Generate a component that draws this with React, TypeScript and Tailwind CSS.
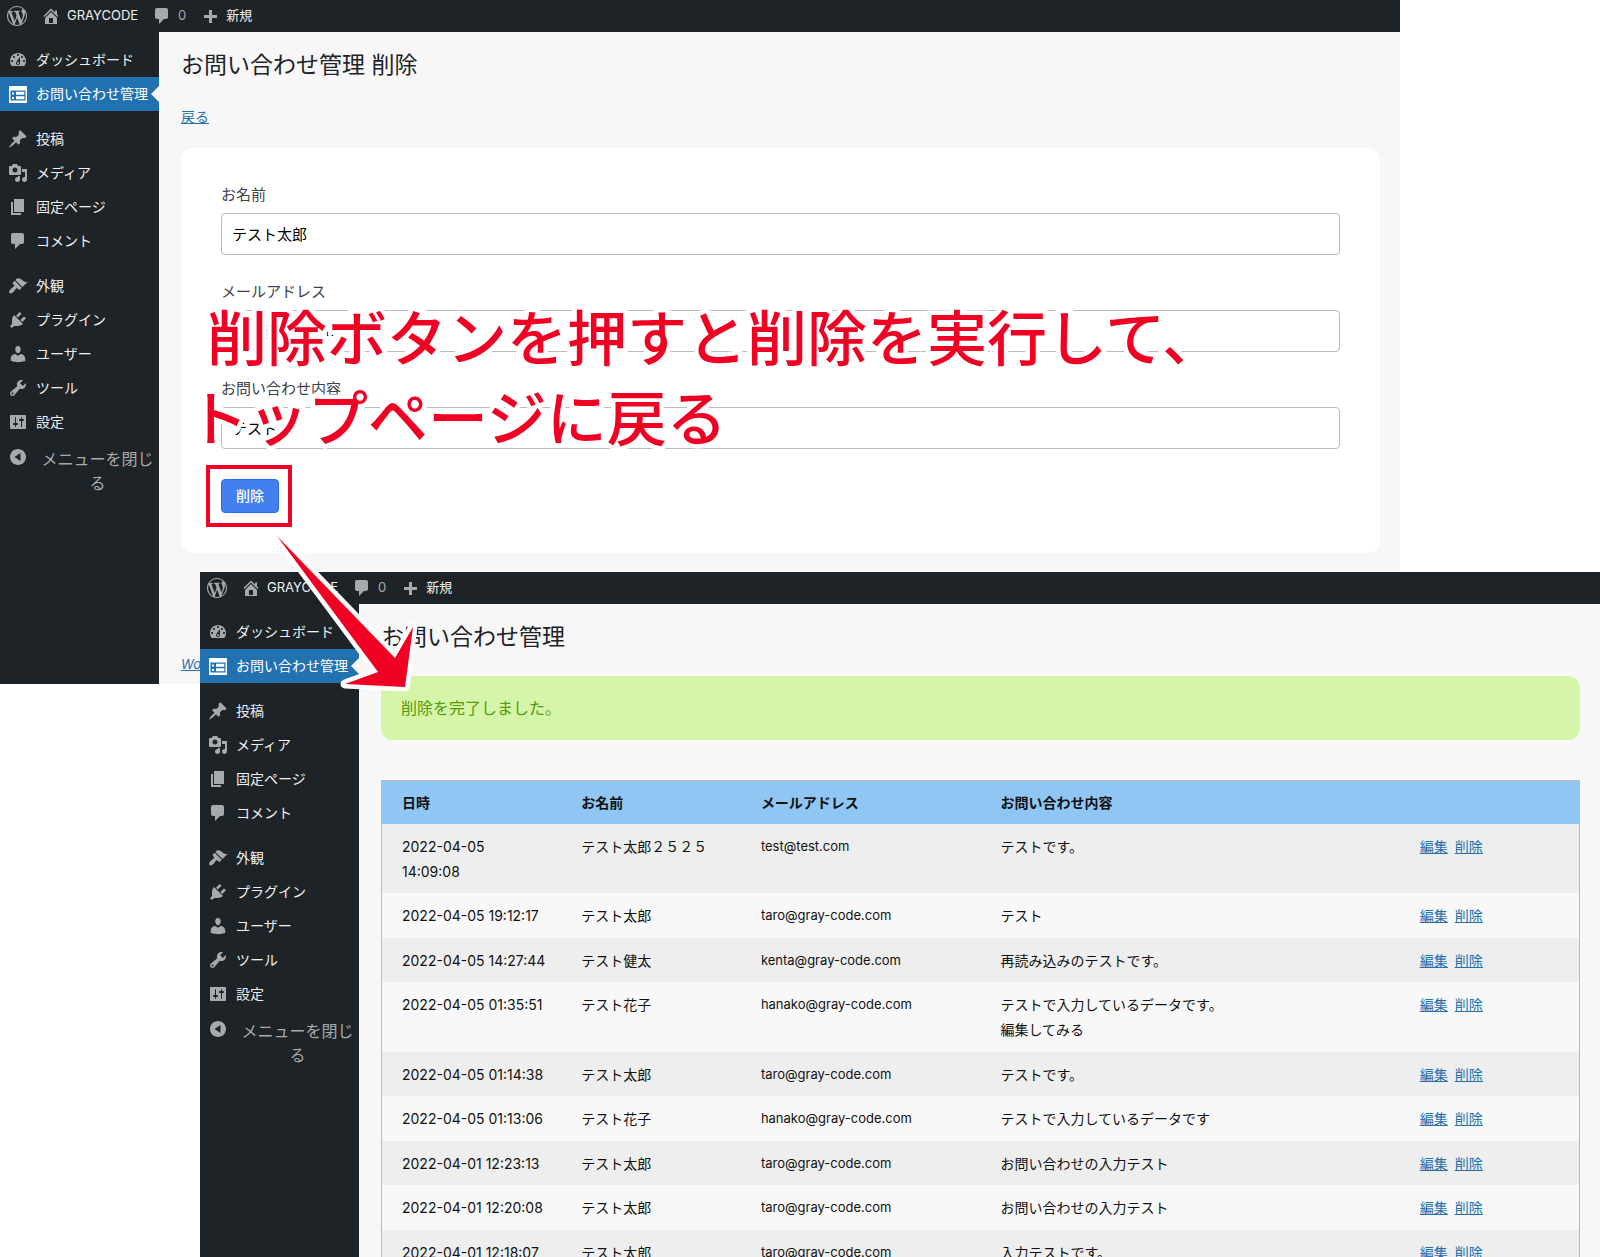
import React from "react";

type IconProps = {
  d: string;
  className?: string;
};

const ICONS = {
  wordpress:
    "M20 10c0-5.51-4.49-10-10-10C4.48 0 0 4.49 0 10c0 5.52 4.48 10 10 10 5.51 0 10-4.48 10-10zM7.78 15.37L4.37 6.22c.55-.02 1.17-.08 1.17-.08.5-.06.44-1.13-.06-1.11 0 0-1.45.11-2.37.11-.18 0-.37 0-.58-.01C4.12 2.69 6.87 1.11 10 1.11c2.33 0 4.45.87 6.05 2.34-.68-.11-1.65.39-1.65 1.58 0 .74.45 1.36.9 2.1.35.61.55 1.36.55 2.46 0 1.49-1.4 5-1.4 5l-3.03-8.37c.54-.02.82-.17.82-.17.5-.05.44-1.25-.06-1.22 0 0-1.44.12-2.38.12-.87 0-2.33-.12-2.33-.12-.5-.03-.56 1.2-.06 1.22l.92.08 1.26 3.41zM17.41 10c.24-.64.74-1.87.43-4.25.7 1.29 1.05 2.71 1.05 4.25 0 3.29-1.73 6.24-4.4 7.78.97-2.59 1.94-5.2 2.92-7.78zM6.1 18.09C3.12 16.65 1.11 13.53 1.11 10c0-1.3.23-2.48.72-3.59C3.25 10.3 4.67 14.2 6.1 18.09zm4.03-6.63l2.58 6.98c-.86.29-1.76.45-2.71.45-.79 0-1.57-.11-2.29-.33.81-2.38 1.62-4.74 2.42-7.1z",
  home: "M16 8.5l1.53 1.53-1.06 1.06L10 4.6l-6.47 6.49-1.06-1.06L10 2.5l4 4v-2h2v4zm-6-2.46l6 5.99V18H4v-5.97zM12 17v-5H8v5h4z",
  comment:
    "M5 2h9c1.1 0 2 .9 2 2v7c0 1.1-.9 2-2 2h-2l-5 5v-5H5c-1.1 0-2-.9-2-2V4c0-1.1.9-2 2-2z",
  plus: "M17 9v3h-5v5H9v-5H4V9h5V4h3v5h5z",
  dashboard:
    "M3.76 16h12.48c1.1-1.37 1.76-3.11 1.76-5 0-4.42-3.58-8-8-8s-8 3.58-8 8c0 1.89.66 3.63 1.76 5zM10 4c.55 0 1 .45 1 1s-.45 1-1 1-1-.45-1-1 .45-1 1-1zM6 6c.55 0 1 .45 1 1s-.45 1-1 1-1-.45-1-1 .45-1 1-1zm8 0c.55 0 1 .45 1 1s-.45 1-1 1-1-.45-1-1 .45-1 1-1zm-5.37 5.55L12 7v6c0 1.1-.9 2-2 2s-2-.9-2-2c0-.57.24-1.08.63-1.45zM4 10c.55 0 1 .45 1 1s-.45 1-1 1-1-.45-1-1 .45-1 1-1zm12 0c.55 0 1 .45 1 1s-.45 1-1 1-1-.45-1-1 .45-1 1-1zm-5 3c0-.55-.45-1-1-1s-1 .45-1 1 .45 1 1 1 1-.45 1-1z",
  feedback:
    "M2 2h16c.55 0 1 .45 1 1v15c0 .55-.45 1-1 1H2c-.55 0-1-.45-1-1V3c0-.55.45-1 1-1zm15.5 14.5v-10H2.5v10h15zM4 8.5v2h2v-2H4zM8 7.7v3.1h8.3V7.7H8zM4 13v2h2v-2H4zm4-.8v3.1h8.3v-3.1H8z",
  post: "M10.44 3.02l1.82-1.82 6.36 6.35-1.83 1.82c-1.05-.68-2.48-.57-3.41.36l-.75.75c-.92.93-1.04 2.35-.35 3.41l-1.83 1.82-2.41-2.41-2.8 2.79c-.42.42-3.38 2.71-3.8 2.29s1.86-3.39 2.28-3.81l2.79-2.79L4.1 9.36l1.83-1.82c1.05.69 2.48.57 3.4-.36l.75-.75c.93-.92 1.05-2.35.36-3.41z",
  media:
    "M13 11V4c0-.55-.45-1-1-1h-1.67L9 1H5L3.67 3H2c-.55 0-1 .45-1 1v7c0 .55.45 1 1 1h10c.55 0 1-.45 1-1zM7 4.5c1.38 0 2.5 1.12 2.5 2.5S8.38 9.5 7 9.5 4.5 8.38 4.5 7 5.62 4.5 7 4.5zM14 6h5v10.5c0 1.38-1.12 2.5-2.5 2.5S14 17.88 14 16.5s1.12-2.5 2.5-2.5c.17 0 .34.02.5.05V9h-3V6zm-4 8.05V13h2v3.5c0 1.38-1.12 2.5-2.5 2.5S7 17.88 7 16.5 8.12 14 9.5 14c.17 0 .34.02.5.05z",
  page: "M6 15V2h10v13H6zm-1 1h8v2H3V5h2v11z",
  appearance:
    "M14.48 11.06L7.41 3.99l1.5-1.5c.5-.56 2.3-.47 3.51.32 1.21.8 1.43 1.28 2.91 2.1 1.18.64 2.45 1.26 4.45.85zm-.71.71L6.7 4.7 4.93 6.47c-.39.39-.39 1.02 0 1.41l1.06 1.06c.39.39.39 1.03 0 1.42-.6.6-1.43 1.11-2.21 1.69-.35.26-.7.53-1.01.84C1.43 14.23.4 16.08 1.4 17.07c.99 1 2.84-.03 4.18-1.36.31-.31.58-.66.85-1.02.57-.78 1.08-1.61 1.69-2.21.39-.39 1.02-.39 1.41 0l1.06 1.06c.39.39 1.02.39 1.41 0z",
  plugins:
    "M13.11 4.36L9.87 7.6 8 5.73l3.24-3.24c.35-.34 1.05-.2 1.56.32.52.51.66 1.21.31 1.55zm-8 1.77l.91-1.12 9.01 9.01-1.19.84c-.71.71-2.63 1.16-3.82 1.16H6.14L4.9 17.26c-.59.59-1.54.59-2.12 0-.59-.58-.59-1.53 0-2.12l1.24-1.24v-3.88c0-1.13.4-3.19 1.09-3.89zm7.26 3.97l3.24-3.24c.34-.35 1.04-.21 1.55.31.52.51.66 1.21.31 1.55l-3.24 3.25z",
  users:
    "M10 9.25c-2.27 0-2.73-3.44-2.73-3.44C7 4.02 7.82 2 9.97 2c2.16 0 2.98 2.02 2.71 3.81 0 0-.41 3.44-2.68 3.44zm0 2.57L12.72 10c2.39 0 4.52 2.33 4.52 4.53v2.49s-3.65 1.13-7.24 1.13c-3.65 0-7.24-1.13-7.24-1.13v-2.49c0-2.25 1.94-4.48 4.47-4.48z",
  tools:
    "M16.68 9.77c-1.34 1.34-3.3 1.67-4.95.99l-5.41 6.52c-.99.99-2.59.99-3.58 0s-.99-2.59 0-3.57l6.52-5.42c-.68-1.65-.35-3.61.99-4.95 1.28-1.28 3.12-1.62 4.72-1.06l-2.89 2.89 2.82 2.82 2.86-2.87c.53 1.58.18 3.39-1.08 4.65zM3.81 16.21c.4.39 1.04.39 1.43 0 .4-.4.4-1.04 0-1.43-.39-.4-1.03-.4-1.43 0-.39.39-.39 1.03 0 1.43z",
  settings:
    "M18 16V4c0-.55-.45-1-1-1H3c-.55 0-1 .45-1 1v12c0 .55.45 1 1 1h14c.55 0 1-.45 1-1zM8 11h1c.55 0 1 .45 1 1s-.45 1-1 1H8v1.5c0 .28-.22.5-.5.5s-.5-.22-.5-.5V13H6c-.55 0-1-.45-1-1s.45-1 1-1h1V5.5c0-.28.22-.5.5-.5s.5.22.5.5V11zm5-2h-1c-.55 0-1-.45-1-1s.45-1 1-1h1V5.5c0-.28.22-.5.5-.5s.5.22.5.5V7h1c.55 0 1 .45 1 1s-.45 1-1 1h-1v5.5c0 .28-.22.5-.5.5s-.5-.22-.5-.5V9z",
  collapse:
    "M10 2c4.42 0 8 3.58 8 8s-3.58 8-8 8-8-3.58-8-8 3.58-8 8-8zM12.5 6L6.5 10l6 4V6z",
};

const MENU_GROUPS = [
  [
    { label: "ダッシュボード", icon: ICONS.dashboard },
    { label: "お問い合わせ管理", icon: ICONS.feedback, active: true },
  ],
  [
    { label: "投稿", icon: ICONS.post },
    { label: "メディア", icon: ICONS.media },
    { label: "固定ページ", icon: ICONS.page },
    { label: "コメント", icon: ICONS.comment },
  ],
  [
    { label: "外観", icon: ICONS.appearance },
    { label: "プラグイン", icon: ICONS.plugins },
    { label: "ユーザー", icon: ICONS.users },
    { label: "ツール", icon: ICONS.tools },
    { label: "設定", icon: ICONS.settings },
  ],
];

const CONTACTS = [
  ["2022-04-05\n14:09:08", "テスト太郎２５２５", "test@test.com", "テストです。"],
  ["2022-04-05 19:12:17", "テスト太郎", "taro@gray-code.com", "テスト"],
  ["2022-04-05 14:27:44", "テスト健太", "kenta@gray-code.com", "再読み込みのテストです。"],
  ["2022-04-05 01:35:51", "テスト花子", "hanako@gray-code.com", "テストで入力しているデータです。\n編集してみる"],
  ["2022-04-05 01:14:38", "テスト太郎", "taro@gray-code.com", "テストです。"],
  ["2022-04-05 01:13:06", "テスト花子", "hanako@gray-code.com", "テストで入力しているデータです"],
  ["2022-04-01 12:23:13", "テスト太郎", "taro@gray-code.com", "お問い合わせの入力テスト"],
  ["2022-04-01 12:20:08", "テスト太郎", "taro@gray-code.com", "お問い合わせの入力テスト"],
  ["2022-04-01 12:18:07", "テスト太郎", "taro@gray-code.com", "入力テストです。"],
];

const Icon = ({ d, className = "text-[#a7aaad]" }: IconProps) => (
  <svg
    viewBox="0 0 20 20"
    className={`size-5 flex-none fill-current ${className}`}
    aria-hidden="true"
  >
    <path fillRule="evenodd" d={d} />
  </svg>
);

const AdminBar = () => (
  <header className="flex h-8 flex-none items-center gap-3.5 bg-[#1d2327] pl-[7px] text-[13px] text-[#f0f0f1]">
    <a href="#" aria-label="WordPress">
      <Icon d={ICONS.wordpress} />
    </a>
    <a href="#" className="flex items-center gap-1.5">
      <Icon d={ICONS.home} />
      GRAYCODE
    </a>
    <a href="#" className="flex items-center gap-1.5 text-[#a7aaad]">
      <Icon d={ICONS.comment} />0
    </a>
    <a href="#" className="flex items-center gap-1.5">
      <Icon d={ICONS.plus} />
      新規
    </a>
  </header>
);

const SideMenu = () => (
  <nav className="w-[159px] flex-none bg-[#1d2327] pt-[11px] text-sm text-[#f0f0f1]">
    <div className="flex flex-col gap-[11px]">
      {MENU_GROUPS.map((group, i) => (
        <ul key={i}>
          {group.map((item) => (
            <li key={item.label} className="relative">
              <a
                href="#"
                className={`flex h-[34px] items-center gap-2 pl-2 whitespace-nowrap ${
                  item.active ? "bg-[#2271b1] text-white" : ""
                }`}
              >
                <Icon
                  d={item.icon}
                  className={item.active ? "text-white" : "text-[#a7aaad]"}
                />
                {item.label}
              </a>
              {item.active && (
                <svg
                  viewBox="0 0 8 16"
                  className="absolute top-1/2 right-0 h-4 w-2 -translate-y-1/2 fill-[#f7f7f7]"
                  aria-hidden="true"
                >
                  <path d="M8 0v16L0 8z" />
                </svg>
              )}
            </li>
          ))}
        </ul>
      ))}
    </div>
    <button className="flex w-full gap-2 pt-2 pl-2 text-base text-[#a7aaad]">
      <Icon d={ICONS.collapse} />
      <span className="flex-1">メニューを閉じる</span>
    </button>
  </nav>
);

type AdminWindowProps = {
  title: string;
  className: string;
  children: React.ReactNode;
};

const AdminWindow = ({ title, className, children }: AdminWindowProps) => (
  <section className={`absolute flex flex-col overflow-hidden ${className}`}>
    <AdminBar />
    <div className="flex flex-1">
      <SideMenu />
      <main className="flex flex-1 flex-col bg-[#f7f7f7] pt-[17px] pr-5 pl-[22px]">
        <h1 className="text-[23px] leading-8 text-[#1d2327]">{title}</h1>
        {children}
      </main>
    </div>
  </section>
);

type FieldProps = {
  id: string;
  label: string;
  value: string;
};

const Field = ({ id, label, value }: FieldProps) => (
  <div>
    <label htmlFor={id} className="mb-1.5 block leading-6 text-[#3c434a]">
      {label}
    </label>
    <input
      id={id}
      type="text"
      className="block h-[42px] w-full rounded-sm border border-[#bbb] bg-white px-2.5 pb-0.5 text-black"
      defaultValue={value}
    />
  </div>
);

const DeleteForm = () => (
  <>
    <a href="#" className="mt-[26px] self-start text-sm leading-5 text-[#2271b1] underline">
      戻る
    </a>
    <form className="mt-[21px] rounded-xl bg-white px-10 pt-[35px] pb-10 text-[15px]">
      <div className="flex flex-col gap-[25px]">
        <Field id="name" label="お名前" value="テスト太郎" />
        <Field id="email" label="メールアドレス" value="test@test.com" />
        <Field id="content" label="お問い合わせ内容" value="テスト" />
      </div>
      <button
        type="button"
        className="mt-[30px] block h-[34px] rounded border border-[#2b70e8] bg-[#4280ef] px-3.5 text-sm font-medium text-white"
      >
        削除
      </button>
    </form>
    <a href="#" className="mt-auto mb-2.5 self-start text-[13px] leading-5 text-[#2271b1] italic underline">
      WordPress
    </a>
  </>
);

const ContactList = () => (
  <>
    <p className="mt-[23px] rounded-xl bg-[#d5f5a8] px-5 py-5 text-base leading-6 text-[#569909]">
      削除を完了しました。
    </p>
    <table className="mt-10 w-full table-fixed border border-[#bbb] text-left text-sm leading-[25px] text-[#111]">
      <thead className="bg-[#90c6f4]">
        <tr>
          <th className="w-[15%] px-5 py-[9px]">日時</th>
          <th className="w-[15%] px-5">お名前</th>
          <th className="w-[20%] px-5">メールアドレス</th>
          <th className="w-[35%] px-5">お問い合わせ内容</th>
          <th className="w-[15%] px-5" aria-label="操作" />
        </tr>
      </thead>
      <tbody>
        {CONTACTS.map(([date, name, email, content]) => (
          <tr
            key={date}
            className="align-top odd:bg-[#eee] even:bg-[#f8f8f8] odd:[&>td]:pb-[9px]"
          >
            <td className="py-2.5 pl-5 whitespace-pre">{date}</td>
            <td className="px-5 py-2.5">{name}</td>
            <td className="px-5 py-2.5 text-[13px]">{email}</td>
            <td className="px-5 py-2.5 whitespace-pre-line">{content}</td>
            <td className="px-5 py-2.5 text-[#2271b1]">
              <a href="#" className="mr-[7px] underline">
                編集
              </a>
              <a href="#" className="underline">
                削除
              </a>
            </td>
          </tr>
        ))}
      </tbody>
    </table>
  </>
);

const Annotations = () => (
  <div className="pointer-events-none absolute inset-0">
    <p className="absolute top-[299px] left-[188px] text-[60px] leading-[80px] font-medium whitespace-nowrap text-[#f00022] [-webkit-text-stroke:9px_white] [paint-order:stroke_fill]">
      <span className="block pl-[19px]">削除ボタンを押すと削除を実行して、</span>
      <span className="block">トップページに戻る</span>
    </p>
    <div className="absolute top-[465px] left-[206px] h-[62px] w-[86px] border-4 border-[#f00022]" />
    <svg
      viewBox="0 0 150 165"
      className="absolute top-[530px] left-[270px] h-[165px] w-[150px]"
      aria-hidden="true"
    >
      <path
        d="M7 6L125 128L143 97L135 157L75 154L108 142Z"
        fill="#f00022"
        stroke="white"
        strokeWidth="9"
        strokeLinejoin="round"
        paintOrder="stroke"
      />
    </svg>
  </div>
);

export default function App() {
  return (
    <div className="relative h-screen overflow-hidden bg-white font-['Inter','Noto_Sans_CJK_JP',sans-serif]">
      <AdminWindow
        title="お問い合わせ管理 削除"
        className="top-0 right-[200px] left-0 h-[684px]"
      >
        <DeleteForm />
      </AdminWindow>
      <AdminWindow
        title="お問い合わせ管理"
        className="top-[572px] right-0 bottom-0 left-[200px]"
      >
        <ContactList />
      </AdminWindow>
      <Annotations />
    </div>
  );
}
